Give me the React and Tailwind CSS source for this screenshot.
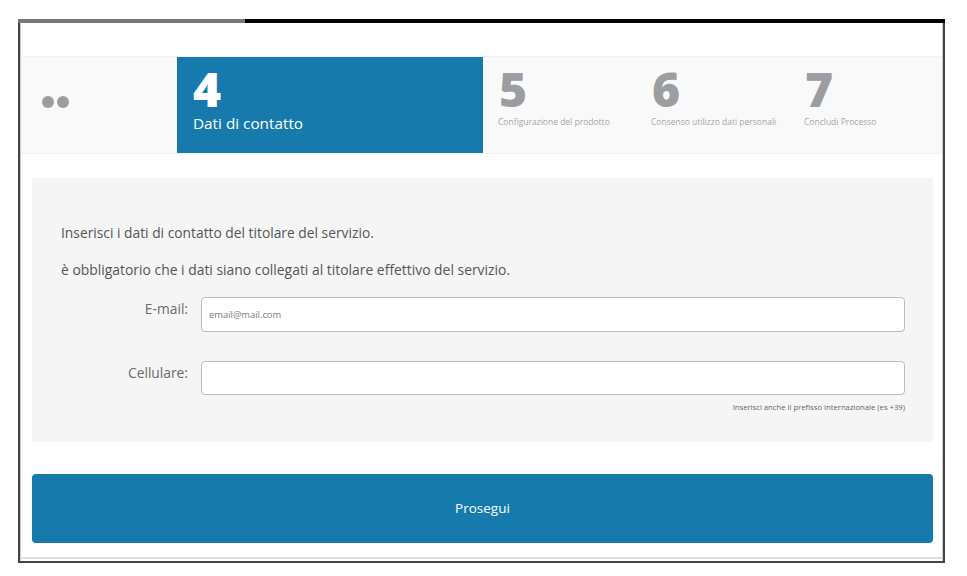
const steps = [
  { n: 5, label: 'Configurazione del prodotto' },
  { n: 6, label: 'Consenso utilizzo dati personali' },
  { n: 7, label: 'Concludi Processo' },
];

function Field({ label, placeholder, className, inputClass }) {
  return (
    <div className={`flex ${className}`}>
      <label className="w-[169px] shrink-0 pr-[13px] pt-[1px] text-right text-[13.8px] leading-[22px] text-[#6b6b6b]">
        {label}
      </label>
      <input
        placeholder={placeholder}
        className={`flex-1 rounded-[4px] border border-[#bbb] bg-white px-[7px] text-[9.4px] outline-none placeholder:text-[#808080] ${inputClass}`}
      />
    </div>
  );
}

export default function App() {
  return (
    <div className="h-[576px] w-[967px] bg-white pl-[18px] pt-[19px] font-['Open_Sans',sans-serif]">
      <div className="flex h-[544px] w-[927px] flex-col border-b-2 border-l-2 border-r-2 border-[#444] shadow-[inset_1px_0_0_#ccc,inset_-1px_0_0_#ccc]">
        {/* top edge, lighter on the left */}
        <div className="-mx-[2px] flex h-[4px] shrink-0">
          <div className="w-[227px] bg-[#777]" />
          <div className="flex-1 bg-black" />
        </div>

        {/* steps */}
        <div className="mx-[1px] mt-[33px] flex h-[98px] shrink-0 border-y border-[#f2f2f2] bg-[#f9f9f9]">
          <div className="flex w-[156px] shrink-0 items-center gap-[3px] pb-[7px] pl-[21px]">
            <span className="h-[12px] w-[12px] rounded-full bg-[#9b9da0]" />
            <span className="h-[12px] w-[12px] rounded-full bg-[#9b9da0]" />
          </div>
          <div className="w-[306px] shrink-0 bg-[#167aac] pl-[16px] text-white">
            <div className="mt-[4px] text-[48px] font-extrabold leading-[56px]">4</div>
            <div className="-mt-[4px] text-[15.3px] leading-[20px]">Dati di contatto</div>
          </div>
          {steps.map((step) => (
            <div key={step.n} className="w-[153px] shrink-0 pl-[16px]">
              <div className="mt-[4px] text-[48px] font-extrabold leading-[56px] text-[#9b9da0]">{step.n}</div>
              <div className="-ml-[1px] -mt-[1px] text-[8.5px] leading-[12px] text-[#a6a6a6]">{step.label}</div>
            </div>
          ))}
        </div>

        {/* form */}
        <div className="ml-[12px] mr-[10px] mt-[24px] h-[264px] shrink-0 bg-[#f5f5f5] pl-[29px] pr-[28px] pt-[44px]">
          <p className="text-[13.8px] leading-[22px] text-[#555]">Inserisci i dati di contatto del titolare del servizio.</p>
          <p className="mt-[15px] text-[13.9px] leading-[22px] text-[#555]">
            è obbligatorio che i dati siano collegati al titolare effettivo del servizio.
          </p>
          <div className="-ml-[29px]">
            <Field label="E-mail:" placeholder="email@mail.com" className="mt-[16px]" inputClass="h-[35px]" />
            <Field label="Cellulare:" className="mt-[29px]" inputClass="h-[34px]" />
          </div>
          <p className="mt-[6px] text-right text-[7.7px] leading-[12px] text-[#666]">
            Inserisci anche il prefisso internazionale (es +39)
          </p>
        </div>

        <button className="ml-[12px] mr-[10px] mt-[32px] flex h-[69px] shrink-0 items-center justify-center rounded-[4px] bg-[#167aac] text-[13.5px] text-white">
          Prosegui
        </button>

        <div className="mb-[2px] mt-auto h-[2px] bg-[#ddd]" />
      </div>
    </div>
  );
}
